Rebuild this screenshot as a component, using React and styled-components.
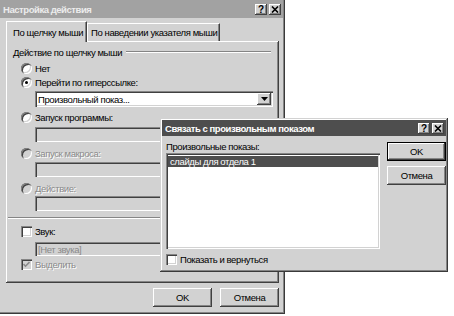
import React from "react";
import styled, { createGlobalStyle } from "styled-components";

const FACE = "#d2d2d2";

const Global = createGlobalStyle`
  html, body { margin: 0; padding: 0; background: #fff; }
  body { font-family: "Liberation Sans", Arial, sans-serif; font-size: 9.5px; letter-spacing: -0.4px; color: #000; }
`;

const Desktop = styled.div`
  position: relative;
  width: 454px;
  height: 316px;
  overflow: hidden;
  background: #fff;
`;

const Window = styled.div`
  display: flex;
  flex-direction: column;
  box-sizing: border-box;
  width: ${(p) => p.$w}px;
  height: ${(p) => p.$h}px;
  padding: 2px;
  background: ${FACE};
  box-shadow: inset -1px -1px #3a3a3a, inset 1px 1px ${FACE}, inset -2px -2px #858585, inset 2px 2px #fff;
`;

const MainWindow = styled(Window)`
  margin: -2px 0 0 -2px;
`;

const FloatingWindow = styled(Window)`
  position: absolute;
  left: 160px;
  top: 118px;
`;

const TitleBar = styled.div`
  display: flex;
  align-items: center;
  justify-content: space-between;
  height: ${(p) => p.$h}px;
  padding: 0 2px 0 3px;
  background: ${(p) => (p.$active ? "#4e4e4e" : "#a2a2a2")};
  color: ${(p) => (p.$active ? "#fff" : "#ececec")};
  font-weight: bold;
  font-size: 9.5px;
  letter-spacing: -0.45px;
`;

const TitleButtons = styled.div`
  display: flex;
  gap: 2px;
`;

const TitleButton = styled.span`
  display: flex;
  align-items: center;
  justify-content: center;
  width: 12px;
  height: 11px;
  background: ${FACE};
  color: #000;
  font-size: 10px;
  letter-spacing: 0;
  font-weight: bold;
  box-shadow: inset -1px -1px #404040, inset 1px 1px #fff, inset -2px -2px #858585;
`;

const MainBody = styled.div`
  display: flex;
  flex-direction: column;
  padding: 3px 0 0 6px;
`;

const TabStrip = styled.div`
  display: flex;
  align-items: flex-end;
  height: 20px;
`;

const Tab = styled.div`
  position: relative;
  z-index: ${(p) => (p.$sel ? 1 : 0)};
  display: flex;
  align-items: center;
  box-sizing: border-box;
  width: ${(p) => p.$w}px;
  height: ${(p) => (p.$sel ? 21 : 18)}px;
  margin-bottom: ${(p) => (p.$sel ? -1 : 0)}px;
  padding-left: ${(p) => (p.$sel ? 6 : 3)}px;
  background: ${FACE};
  border-top: 1px solid #fff;
  border-left: 1px solid #fff;
  border-right: 1px solid #404040;
  box-shadow: inset -1px 0 #858585;
  white-space: nowrap;
`;

const Panel = styled.div`
  display: flex;
  flex-direction: column;
  box-sizing: border-box;
  width: 273px;
  height: 242px;
  padding: 1px 2px 2px 1px;
  box-shadow: inset -1px -1px #404040, inset 1px 1px #fff, inset -2px -2px #858585;
`;

const GroupTitle = styled.div`
  display: flex;
  align-items: center;
  gap: 4px;
  height: 14px;
  margin: 3px 6px 0 6px;
  &::after {
    content: "";
    flex: 1;
    height: 0;
    border-top: 1px solid #858585;
    border-bottom: 1px solid #fff;
  }
`;

const Option = styled.label`
  display: flex;
  align-items: center;
  gap: 2px;
  height: 14px;
  margin: ${(p) => p.$mt || 0}px 0 0 ${(p) => (p.$left ?? 14)}px;
  color: ${(p) => (p.$disabled ? "#8a8a8a" : "#000")};
  text-shadow: ${(p) => (p.$disabled ? "1px 1px #fff" : "none")};
  white-space: nowrap;
`;

const RadioCircle = styled.span`
  position: relative;
  flex: none;
  width: 11px;
  height: 11px;
  margin-right: 1px;
  border-radius: 50%;
  background: ${(p) => (p.$disabled ? FACE : "#fff")};
  box-shadow: inset 1px 1px #858585, inset 2px 2px #404040, inset -1px -1px #fff, inset -2px -2px ${FACE};
  &::after {
    content: "";
    display: ${(p) => (p.$on ? "block" : "none")};
    position: absolute;
    left: 4px;
    top: 4px;
    width: 3px;
    height: 3px;
    border-radius: 50%;
    background: #000;
  }
`;

const CheckBox = styled.span`
  display: flex;
  align-items: center;
  justify-content: center;
  flex: none;
  width: 11px;
  height: 11px;
  margin-right: 1px;
  background: ${(p) => (p.$disabled ? FACE : "#fff")};
  box-shadow: inset 1px 1px #858585, inset 2px 2px #404040, inset -1px -1px #fff, inset -2px -2px ${FACE};
`;

const Field = styled.div`
  display: flex;
  align-items: center;
  box-sizing: border-box;
  width: ${(p) => p.$w || 238}px;
  height: ${(p) => p.$h || 15}px;
  margin: ${(p) => p.$mt || 0}px 0 0 28px;
  padding: 0 2px 0 3px;
  background: ${(p) => (p.$disabled ? FACE : "#fff")};
  color: ${(p) => (p.$disabled ? "#8a8a8a" : "#000")};
  box-shadow: inset 1px 1px #858585, inset 2px 2px #404040, inset -1px -1px #fff, inset -2px -2px ${FACE};
`;

const FieldText = styled.span`
  flex: 1;
  white-space: nowrap;
`;

const DropButton = styled.span`
  display: flex;
  align-items: center;
  justify-content: center;
  width: 14px;
  height: 12px;
  background: ${FACE};
  box-shadow: inset -1px -1px #404040, inset 1px 1px #fff, inset -2px -2px #858585;
`;

const Separator = styled.div`
  height: 0;
  margin: 6px 2px 0 1px;
  border-top: 1px solid #858585;
  border-bottom: 1px solid #fff;
`;

const ButtonRow = styled.div`
  display: flex;
  justify-content: flex-end;
  gap: 8px;
  width: 273px;
  margin-top: 5px;
`;

const Button = styled.div`
  display: flex;
  align-items: center;
  justify-content: center;
  box-sizing: border-box;
  width: ${(p) => p.$w || 59}px;
  height: ${(p) => p.$h || 19}px;
  background: ${FACE};
  box-shadow: ${(p) =>
    p.$default
      ? "inset 0 0 0 1px #000, inset -2px -2px #404040, inset 2px 2px #fff, inset -3px -3px #858585"
      : "inset -1px -1px #404040, inset 1px 1px #fff, inset -2px -2px #858585"};
`;

const DialogBody = styled.div`
  display: flex;
  gap: 7px;
  padding: 0 0 0 4px;
`;

const LeftColumn = styled.div`
  display: flex;
  flex-direction: column;
  width: 214px;
`;

const RightColumn = styled.div`
  display: flex;
  flex-direction: column;
  gap: 5px;
  padding-top: 6px;
`;

const Caption = styled.div`
  display: flex;
  align-items: center;
  height: 14px;
  margin-top: 3px;
`;

const ListBox = styled.div`
  display: flex;
  flex-direction: column;
  box-sizing: border-box;
  height: 96px;
  padding: 3px 2px 2px 2px;
  background: #fff;
  box-shadow: inset 1px 1px #858585, inset 2px 2px #404040, inset -1px -1px #fff, inset -2px -2px ${FACE};
`;

const ListItem = styled.div`
  display: flex;
  align-items: center;
  height: 11px;
  padding-left: 2px;
  background: ${(p) => (p.$sel ? "#4e4e4e" : "transparent")};
  color: ${(p) => (p.$sel ? "#fff" : "#000")};
`;

const Help = () => <TitleButton>?</TitleButton>;
const Close = () => (
  <TitleButton>
    <svg width="8" height="7" viewBox="0 0 8 7">
      <path d="M1 0.5 L7 6.5 M7 0.5 L1 6.5" stroke="#000" strokeWidth="1.6" />
    </svg>
  </TitleButton>
);

const Check = ({ color }) => (
  <svg width="7" height="7" viewBox="0 0 7 7">
    <path d="M0.5 3 L2.5 5.2 L6.5 1" stroke={color} strokeWidth="1.6" fill="none" />
  </svg>
);

const App = () => (
  <Desktop>
    <Global />
    <MainWindow $w={287} $h={316}>
      <TitleBar $h={18}>
        <span>Настройка действия</span>
        <TitleButtons>
          <Help />
          <Close />
        </TitleButtons>
      </TitleBar>
      <MainBody>
        <TabStrip>
          <Tab $sel $w={81}>По щелчку мыши</Tab>
          <Tab $w={133}>По наведении указателя мыши</Tab>
        </TabStrip>
        <Panel>
          <GroupTitle>Действие по щелчку мыши</GroupTitle>
          <Option $mt={2}>
            <RadioCircle />
            Нет
          </Option>
          <Option>
            <RadioCircle $on />
            Перейти по гиперссылке:
          </Option>
          <Field $mt={2} $h={16}>
            <FieldText>Произвольный показ...</FieldText>
            <DropButton>
              <svg width="7" height="4" viewBox="0 0 7 4">
                <path d="M0 0 H7 L3.5 4 Z" fill="#000" />
              </svg>
            </DropButton>
          </Field>
          <Option $mt={3}>
            <RadioCircle />
            Запуск программы:
          </Option>
          <Field $mt={3} $disabled />
          <Option $mt={4} $disabled>
            <RadioCircle $disabled />
            Запуск макроса:
          </Option>
          <Field $mt={2} $disabled />
          <Option $mt={4} $disabled>
            <RadioCircle $disabled />
            Действие:
          </Option>
          <Field $mt={1} $disabled />
          <Separator />
          <Option $mt={5}>
            <CheckBox />
            Звук:
          </Option>
          <Field $mt={4} $h={14} $disabled>
            <FieldText>[Нет звука]</FieldText>
          </Field>
          <Option $mt={1} $disabled>
            <CheckBox $disabled>
              <Check color="#8a8a8a" />
            </CheckBox>
            Выделить
          </Option>
        </Panel>
        <ButtonRow>
          <Button>OK</Button>
          <Button>Отмена</Button>
        </ButtonRow>
      </MainBody>
    </MainWindow>

    <FloatingWindow $w={288} $h={154}>
      <TitleBar $h={16} $active>
        <span>Связать с произвольным показом</span>
        <TitleButtons>
          <Help />
          <Close />
        </TitleButtons>
      </TitleBar>
      <DialogBody>
        <LeftColumn>
          <Caption>Произвольные показы:</Caption>
          <ListBox>
            <ListItem $sel>слайды для отдела 1</ListItem>
          </ListBox>
          <Option $mt={3} $left={0}>
            <CheckBox />
            Показать и вернуться
          </Option>
        </LeftColumn>
        <RightColumn>
          <Button $default>OK</Button>
          <Button>Отмена</Button>
        </RightColumn>
      </DialogBody>
    </FloatingWindow>
  </Desktop>
);

export default App;
